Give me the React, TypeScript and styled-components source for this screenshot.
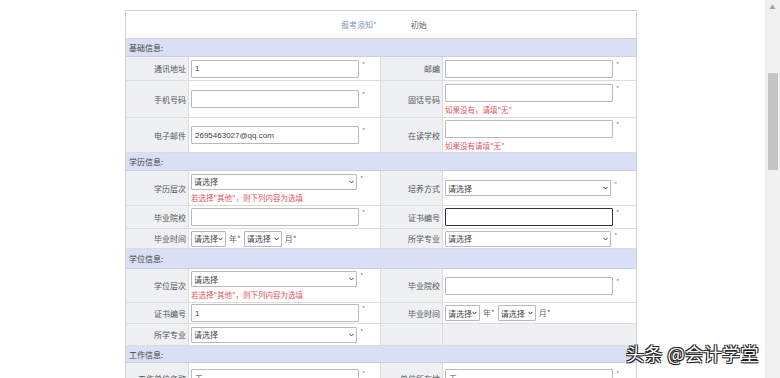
import styled, { createGlobalStyle } from 'styled-components'

const GlobalStyle = createGlobalStyle`
  html, body {
    margin: 0;
    padding: 0;
    background: #ffffff;
    overflow: hidden;
  }
  body {
    font-family: "Noto Sans CJK SC", "Liberation Sans", sans-serif;
  }
`

const Page = styled.div`
  display: flex;
  width: 780px;
  height: 378px;
  overflow: hidden;
  position: relative;
`
const Main = styled.div`
  flex: 1 1 auto;
  padding: 10px 0 0 125px;
`
const Sheet = styled.div`
  width: 510px;
  border: 1px solid #d4d4d4;
  border-bottom: none;
  font-size: 8px;
  color: #555;
`
const Head = styled.div`
  height: 27px;
  display: flex;
  align-items: center;
  padding-left: 215px;
  column-gap: 34px;
  border-bottom: 1px solid #d4d4d4;
`
const HeadLink = styled.span<{ $muted?: boolean }>`
  color: ${(p) => (p.$muted ? '#666' : '#7e93b8')};
  font-size: 8px;
`
const Section = styled.div<{ $h: number }>`
  height: ${(p) => p.$h}px;
  display: flex;
  align-items: center;
  padding-left: 3px;
  background: #d9dff4;
  border-bottom: 1px solid #c9cfe4;
  color: #444;
  font-size: 8px;
`
const Row = styled.div<{ $h: number }>`
  display: grid;
  grid-template-columns: 63px 192px 62px 193px;
  height: ${(p) => p.$h}px;
  border-bottom: 1px solid #dcdcdc;
`
const Label = styled.div`
  background: #eef0f3;
  border-right: 1px solid #dcdcdc;
  display: flex;
  align-items: center;
  justify-content: flex-end;
  padding-right: 2px;
  color: #555;
  font-size: 8px;
  white-space: nowrap;
`
const Value = styled.div<{ $empty?: boolean }>`
  background: ${(p) => (p.$empty ? '#eef0f3' : '#ffffff')};
  border-right: 1px solid #dcdcdc;
  display: flex;
  flex-direction: column;
  justify-content: center;
  padding-left: 2px;
  &:last-child {
    border-right: none;
  }
`
const Line = styled.div`
  display: flex;
  align-items: flex-start;
  column-gap: 3px;
`
const Field = styled.input<{ $focus?: boolean }>`
  box-sizing: border-box;
  width: 168px;
  height: 18px;
  border: 1px solid ${(p) => (p.$focus ? '#333' : '#b9b9b9')};
  border-radius: 1px;
  padding: 0 3px;
  font-family: "Liberation Sans", "Noto Sans CJK SC", sans-serif;
  font-size: 8px;
  color: #444;
  background: #fff;
  outline: none;
`
const PickBox = styled.div<{ $w: number }>`
  position: relative;
  width: ${(p) => p.$w}px;
  height: 16px;
`
const Pick = styled.select`
  appearance: none;
  box-sizing: border-box;
  width: 100%;
  height: 100%;
  border: 1px solid #b9b9b9;
  border-radius: 1px;
  padding: 0 2px;
  font-family: "Noto Sans CJK SC", sans-serif;
  font-size: 8px;
  color: #444;
  background: #fff;
  outline: none;
`
const Chevron = styled.svg`
  position: absolute;
  right: 3px;
  top: 6px;
  width: 5px;
  height: 4px;
  pointer-events: none;
`
const Star = styled.span`
  color: #888;
  font-size: 7px;
  line-height: 8px;
`
const Unit = styled.span`
  color: #666;
  font-size: 8px;
  line-height: 16px;
`
const Hint = styled.div`
  color: #e2545e;
  font-size: 7.5px;
  margin-top: 2px;
  white-space: nowrap;
`
const Scrollbar = styled.div`
  flex: 0 0 15px;
  background: #f1f1f1;
  display: flex;
  flex-direction: column;
  align-items: center;
`
const Arrow = styled.div`
  height: 14px;
  color: #a3a3a3;
  font-size: 6px;
  line-height: 14px;
`
const Thumb = styled.div`
  width: 10px;
  height: 97px;
  margin-top: 59px;
  background: #c4c4c4;
`
const Watermark = styled.div`
  position: absolute;
  left: 626px;
  top: 340px;
  font-size: 18px;
  color: #ffffff;
  letter-spacing: 0.5px;
  text-shadow: 1px 1px 0 #222, -1px -1px 0 #222, 1px -1px 0 #222, -1px 1px 0 #222;
`

const Input = ({ value = '', focus = false }: { value?: string; focus?: boolean }) => (
  <Line>
    <Field defaultValue={value} $focus={focus} readOnly />
    <Star>*</Star>
  </Line>
)

const Drop = ({ w }: { w: number }) => (
  <PickBox $w={w}>
    <Pick defaultValue="请选择">
      <option>请选择</option>
    </Pick>
    <Chevron viewBox="0 0 5 4">
      <path d="M0.5 0.8 L2.5 3 L4.5 0.8" fill="none" stroke="#444" strokeWidth="1" />
    </Chevron>
  </PickBox>
)

const Select = ({ w = 166 }: { w?: number }) => (
  <Line>
    <Drop w={w} />
    <Star>*</Star>
  </Line>
)

const DateSel = () => (
  <Line>
    <Drop w={35} />
    <Unit>年*</Unit>
    <Drop w={38} />
    <Unit>月*</Unit>
  </Line>
)

const App = () => (
  <Page>
    <GlobalStyle />
    <Main>
      <Sheet>
        <Head>
          <HeadLink>报考须知*</HeadLink>
          <HeadLink $muted>初始</HeadLink>
        </Head>

        <Section $h={17}>基础信息:</Section>
        <Row $h={23}>
          <Label>通讯地址</Label>
          <Value><Input value="1" /></Value>
          <Label>邮编</Label>
          <Value><Input /></Value>
        </Row>
        <Row $h={36}>
          <Label>手机号码</Label>
          <Value><Input /></Value>
          <Label>固话号码</Label>
          <Value>
            <Input />
            <Hint>如果没有，请填"无"</Hint>
          </Value>
        </Row>
        <Row $h={34}>
          <Label>电子邮件</Label>
          <Value><Input value="2695463027@qq.com" /></Value>
          <Label>在读学校</Label>
          <Value>
            <Input />
            <Hint>如果没有请填"无"</Hint>
          </Value>
        </Row>

        <Section $h={17}>学历信息:</Section>
        <Row $h={34}>
          <Label>学历层次</Label>
          <Value>
            <Select />
            <Hint>若选择"其他"，则下列内容为选填</Hint>
          </Value>
          <Label>培养方式</Label>
          <Value><Select /></Value>
        </Row>
        <Row $h={22}>
          <Label>毕业院校</Label>
          <Value><Input /></Value>
          <Label>证书编号</Label>
          <Value><Input focus /></Value>
        </Row>
        <Row $h={19}>
          <Label>毕业时间</Label>
          <Value><DateSel /></Value>
          <Label>所学专业</Label>
          <Value><Select /></Value>
        </Row>

        <Section $h={19}>学位信息:</Section>
        <Row $h={33}>
          <Label>学位层次</Label>
          <Value>
            <Select />
            <Hint>若选择"其他"，则下列内容为选填</Hint>
          </Value>
          <Label>毕业院校</Label>
          <Value><Input /></Value>
        </Row>
        <Row $h={20}>
          <Label>证书编号</Label>
          <Value><Input value="1" /></Value>
          <Label>毕业时间</Label>
          <Value><DateSel /></Value>
        </Row>
        <Row $h={21}>
          <Label>所学专业</Label>
          <Value><Select /></Value>
          <Label />
          <Value $empty />
        </Row>

        <Section $h={16}>工作信息:</Section>
        <Row $h={30}>
          <Label>工作单位名称</Label>
          <Value><Input value="无" /></Value>
          <Label>单位所在地</Label>
          <Value><Input value="无" /></Value>
        </Row>
      </Sheet>
    </Main>
    <Scrollbar>
      <Arrow>▲</Arrow>
      <Thumb />
    </Scrollbar>
    <Watermark>头条 @会计学堂</Watermark>
  </Page>
)

export default App
